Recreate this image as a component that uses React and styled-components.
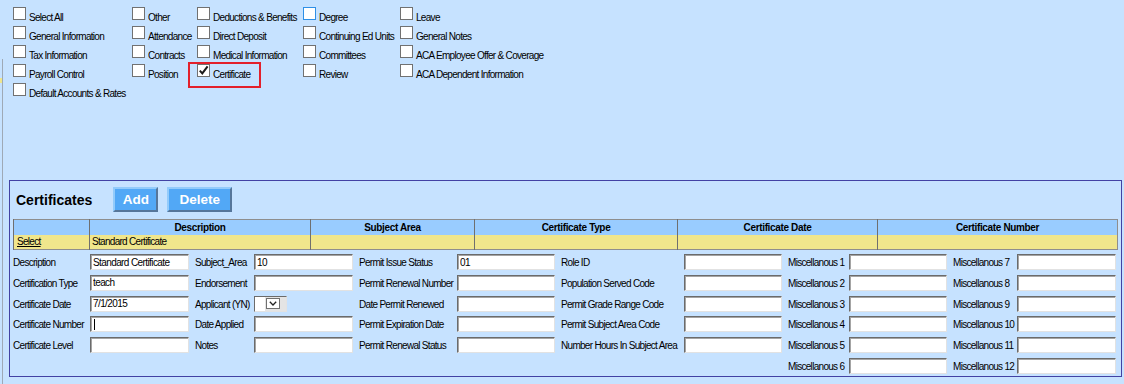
import { Fragment } from 'react';
import styled, { createGlobalStyle } from 'styled-components';

const GlobalStyle = createGlobalStyle`
  html, body {
    margin: 0;
    background: #c6e2ff;
  }
  body {
    font-family: 'Liberation Sans', Arial, sans-serif;
    font-size: 10px;
    color: #000;
  }
`;

const Page = styled.div`
  display: flex;
  width: 1124px;
  min-height: 384px;
  background: #c6e2ff;
`;

/* clipped edge of the neighbouring frame */
const LeftEdge = styled.div`
  flex-shrink: 0;
  width: 2px;
  margin-top: 59px;
  border-right: 1px solid #9ea9b6;
  .mark {
    height: 5px;
    margin-top: 19px;
    background: #f0e68c;
  }
`;

const Main = styled.div`
  flex: 1;
  display: flex;
  flex-direction: column;
`;

/* checkbox list */
const Options = styled.div`
  display: flex;
  height: 95px;
  padding: 7px 0 0 10px;
`;

const OptionCol = styled.div`
  display: flex;
  flex-direction: column;
  width: ${(p) => (p.$w ? `${p.$w}px` : 'auto')};
`;

const Option = styled.label`
  position: relative;
  display: flex;
  height: 19px;
  ${(p) =>
    p.$marked &&
    `
    &::after {
      content: '';
      position: absolute;
      left: -9px;
      top: -2px;
      width: 73px;
      height: 26px;
      box-sizing: border-box;
      border: 2px solid #e3202b;
    }
  `}
`;

const Box = styled.span`
  flex-shrink: 0;
  display: flex;
  align-items: center;
  justify-content: center;
  width: 13px;
  height: 13px;
  box-sizing: border-box;
  border: 1px solid ${(p) => (p.$hover ? '#2e8fe6' : '#717171')};
  background: #fff;
  overflow: visible;
`;

const OptionText = styled.span`
  margin-left: 3px;
  padding-top: 2px;
  line-height: 17px;
  letter-spacing: -0.7px;
  white-space: nowrap;
`;

/* certificates panel */
const Panel = styled.section`
  margin: 78px 3px 0 6px;
  padding: 6px 3px 2px 3px;
  border: 1px solid #4242a4;
`;

const Toolbar = styled.div`
  display: flex;
  align-items: center;
  height: 25px;
`;

const Title = styled.h2`
  margin: 0 21px 0 3px;
  font-size: 14px;
  font-weight: bold;
`;

const ToolButton = styled.button`
  width: ${(p) => p.$w}px;
  height: 25px;
  margin-right: 9px;
  padding: 0;
  box-sizing: border-box;
  border: 2px solid;
  border-color: #93cbfb #56769a #56769a #93cbfb;
  background: #52a8f6;
  color: #fff;
  font: bold 13.5px 'Liberation Sans', Arial, sans-serif;
  cursor: pointer;
`;

const DataTable = styled.table`
  width: 1104px;
  margin-top: 7px;
  border-collapse: collapse;
  table-layout: fixed;
  border: 1px solid #8e8e8e;
`;

const Col = styled.col`
  width: ${(p) => p.$w}px;
`;

const HeadCell = styled.th`
  height: 15px;
  padding: 0;
  border-left: 1px solid #6f6f6f;
  background: #99ccff;
  font-weight: bold;
  font-size: 10px;
  line-height: 15px;
  letter-spacing: -0.35px;
  text-align: center;
`;

const BodyCell = styled.td`
  height: 14px;
  padding: 0 0 0 ${(p) => (p.$link ? 3 : 2)}px;
  border-left: 1px solid #6f6f6f;
  background: #f0e68c;
  line-height: 14px;
  letter-spacing: -0.7px;
  white-space: nowrap;
  a {
    color: #000;
    text-decoration: underline;
  }
`;

const FieldGrid = styled.div`
  display: grid;
  grid-template-columns: 77px 99px 65px 99px 104px 98px 129px 98px 67px 98px 70px 99px;
  grid-auto-rows: 16px;
  row-gap: 4.8px;
  margin-top: 4px;
`;

const FieldLabel = styled.span`
  padding: 2px 0 0 ${(p) => (p.$first ? 0 : 6)}px;
  line-height: 14px;
  letter-spacing: -0.7px;
  white-space: nowrap;
`;

const TextInput = styled.input`
  width: 100%;
  height: 16px;
  margin: 0;
  padding: 0 2px;
  box-sizing: border-box;
  border: 1px solid;
  border-color: #6b6b6b #e2e2e2 #e2e2e2 #6b6b6b;
  box-shadow: inset 1px 1px 0 #a4a4a4;
  background-color: #fff;
  font: 10px 'Liberation Sans', Arial, sans-serif;
  letter-spacing: -0.6px;
  color: #000;
  outline: none;
  ${(p) =>
    p.$caret &&
    `
    background-image: linear-gradient(#000, #000);
    background-repeat: no-repeat;
    background-position: 3px 2px;
    background-size: 1px 11px;
  `}
`;

const SelectBox = styled.div`
  display: flex;
  width: 33px;
  height: 16px;
  box-sizing: border-box;
  border: 1px solid;
  border-color: #6b6b6b #e2e2e2 #e2e2e2 #6b6b6b;
  background: #e4e4e4;
  .blank {
    width: 10px;
    background: #fff;
  }
  .arrow {
    display: flex;
    align-items: center;
    justify-content: center;
    width: 14px;
    height: 11px;
    margin: 1px 0 0 1px;
    box-sizing: border-box;
    border: 1px solid #707070;
    background: #fff;
  }
`;

const OPTION_COLS = [
  { w: 119, items: ['Select All', 'General Information', 'Tax Information', 'Payroll Control', 'Default Accounts & Rates'] },
  { w: 65, items: ['Other', 'Attendance', 'Contracts', 'Position'] },
  { w: 106, items: ['Deductions & Benefits', 'Direct Deposit', 'Medical Information', 'Certificate'] },
  { w: 97, items: ['Degree', 'Continuing Ed Units', 'Committees', 'Review'] },
  { w: 0, items: ['Leave', 'General Notes', 'ACA Employee Offer & Coverage', 'ACA Dependent Information'] },
];

const HEADERS = [
  { w: 76, text: '' },
  { w: 221, text: 'Description' },
  { w: 164, text: 'Subject Area' },
  { w: 203, text: 'Certificate Type' },
  { w: 200, text: 'Certificate Date' },
  { w: 240, text: 'Certificate Number' },
];

const f = (label, value = '', kind = 'text') => ({ label, value, kind });

const FIELD_ROWS = [
  [f('Description', 'Standard Certificate'), f('Subject_Area', '10'), f('Permit Issue Status', '01'), f('Role ID'), f('Miscellanous 1'), f('Miscellanous 7')],
  [f('Certification Type', 'teach'), f('Endorsement'), f('Permit Renewal Number'), f('Population Served Code'), f('Miscellanous 2'), f('Miscellanous 8')],
  [f('Certificate Date', '7/1/2015'), f('Applicant (YN)', '', 'select'), f('Date Permit Renewed'), f('Permit Grade Range Code'), f('Miscellanous 3'), f('Miscellanous 9')],
  [f('Certificate Number', '', 'caret'), f('Date Applied'), f('Permit Expiration Date'), f('Permit Subject Area Code'), f('Miscellanous 4'), f('Miscellanous 10')],
  [f('Certificate Level'), f('Notes'), f('Permit Renewal Status'), f('Number Hours In Subject Area'), f('Miscellanous 5'), f('Miscellanous 11')],
  [null, null, null, null, f('Miscellanous 6'), f('Miscellanous 12')],
];

const Check = () => (
  <svg width="11" height="11" viewBox="0 0 11 11">
    <path d="M1.8 5.6 L4.3 8.4 L9.6 1.4" fill="none" stroke="#1b1b1b" strokeWidth="2" />
  </svg>
);

const Chevron = () => (
  <svg width="8" height="5" viewBox="0 0 8 5">
    <polyline points="0.8,0.8 4,4 7.2,0.8" fill="none" stroke="#222" strokeWidth="1.3" />
  </svg>
);

const Field = ({ field }) => {
  if (field.kind === 'select') {
    return (
      <SelectBox>
        <span className="blank" />
        <span className="arrow">
          <Chevron />
        </span>
      </SelectBox>
    );
  }
  return <TextInput type="text" defaultValue={field.value} $caret={field.kind === 'caret'} readOnly />;
};

const App = () => {
  return (
    <>
      <GlobalStyle />
      <Page>
        <LeftEdge>
          <div className="mark" />
        </LeftEdge>
        <Main>
          {/* section checkboxes */}
          <Options>
            {OPTION_COLS.map((col, ci) => (
              <OptionCol key={ci} $w={col.w}>
                {col.items.map((item) => (
                  <Option key={item} $marked={item === 'Certificate'}>
                    <Box $hover={item === 'Degree'}>{item === 'Certificate' && <Check />}</Box>
                    <OptionText>{item}</OptionText>
                  </Option>
                ))}
              </OptionCol>
            ))}
          </Options>

          {/* certificates */}
          <Panel>
            <Toolbar>
              <Title>Certificates</Title>
              <ToolButton $w={45}>Add</ToolButton>
              <ToolButton $w={65}>Delete</ToolButton>
            </Toolbar>
            <DataTable>
              <colgroup>
                {HEADERS.map((h, i) => (
                  <Col key={i} $w={h.w} />
                ))}
              </colgroup>
              <thead>
                <tr>
                  {HEADERS.map((h, i) => (
                    <HeadCell key={i}>{h.text}</HeadCell>
                  ))}
                </tr>
              </thead>
              <tbody>
                <tr>
                  <BodyCell $link>
                    <a href="#select">Select</a>
                  </BodyCell>
                  <BodyCell>Standard Certificate</BodyCell>
                  <BodyCell />
                  <BodyCell />
                  <BodyCell />
                  <BodyCell />
                </tr>
              </tbody>
            </DataTable>
            <FieldGrid>
              {FIELD_ROWS.map((row, r) =>
                row.map((field, c) => (
                  <Fragment key={`${r}-${c}`}>
                    {field ? (
                      <>
                        <FieldLabel $first={c === 0}>{field.label}</FieldLabel>
                        <div>
                          <Field field={field} />
                        </div>
                      </>
                    ) : (
                      <>
                        <span />
                        <span />
                      </>
                    )}
                  </Fragment>
                ))
              )}
            </FieldGrid>
          </Panel>
        </Main>
      </Page>
    </>
  );
};

export default App;
